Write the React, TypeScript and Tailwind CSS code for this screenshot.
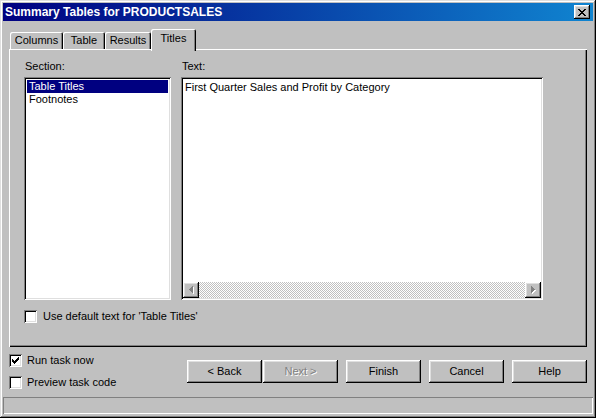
import React from "react";

const raised =
  "shadow-[inset_-1px_-1px_#000,inset_1px_1px_#fff,inset_-2px_-2px_#808080,inset_2px_2px_#dfdfdf]";
const sunken =
  "shadow-[inset_1px_1px_#808080,inset_-1px_-1px_#fff,inset_2px_2px_#000,inset_-2px_-2px_#dfdfdf]";

function Px({ rows, color, dx = 0, dy = 0 }: { rows: [number, number, number][]; color: string; dx?: number; dy?: number }) {
  return (
    <>
      {rows.map(([y, x, w], i) => (
        <rect key={i} x={x + dx} y={y + dy} width={w} height={1} fill={color} />
      ))}
    </>
  );
}

const checkRows: [number, number, number][] = [
  [0, 6, 1],
  [1, 5, 2],
  [2, 0, 1],
  [2, 4, 3],
  [3, 0, 2],
  [3, 3, 3],
  [4, 0, 5],
  [5, 1, 3],
  [6, 2, 1],
];

function CheckBox({ checked }: { checked?: boolean }) {
  return (
    <div className={`w-[13px] h-[13px] bg-white ${sunken} flex items-center justify-center shrink-0`}>
      {checked && (
        <svg width="7" height="7" viewBox="0 0 7 7" shapeRendering="crispEdges">
          <Px rows={checkRows} color="#000" />
        </svg>
      )}
    </div>
  );
}

const xRows: [number, number, number][] = [
  [0, 0, 2],
  [0, 6, 2],
  [1, 1, 2],
  [1, 5, 2],
  [2, 2, 4],
  [3, 3, 2],
  [4, 2, 4],
  [5, 1, 2],
  [5, 5, 2],
  [6, 0, 2],
  [6, 6, 2],
];

const leftArrow: [number, number, number][] = [
  [0, 3, 1],
  [1, 2, 2],
  [2, 1, 3],
  [3, 0, 4],
  [4, 1, 3],
  [5, 2, 2],
  [6, 3, 1],
];
const rightArrow: [number, number, number][] = [
  [0, 0, 1],
  [1, 0, 2],
  [2, 0, 3],
  [3, 0, 4],
  [4, 0, 3],
  [5, 0, 2],
  [6, 0, 1],
];

function ScrollBtn({ dir }: { dir: "l" | "r" }) {
  const rows = dir === "l" ? leftArrow : rightArrow;
  return (
    <div className={`w-[16px] h-[16px] bg-[#c0c0c0] ${raised} flex items-center justify-center shrink-0`}>
      <svg width="5" height="8" viewBox="0 0 5 8" shapeRendering="crispEdges">
        <Px rows={rows} color="#fff" dx={1} dy={1} />
        <Px rows={rows} color="#808080" />
      </svg>
    </div>
  );
}

function Button({ label, disabled }: { label: string; disabled?: boolean }) {
  return (
    <div
      className={`w-[75px] h-[23px] bg-[#c0c0c0] ${raised} flex items-center justify-center text-[11px] leading-[13px] ${
        disabled ? "text-[#808080] [text-shadow:1px_1px_#fff]" : "text-black"
      }`}
    >
      {label}
    </div>
  );
}

function Tab({ label, w, selected }: { label: string; w: string; selected?: boolean }) {
  if (selected) {
    return (
      <div
        className={`${w} h-[22px] mb-[-2px] relative z-10 bg-[#c0c0c0] rounded-t-[2px] shadow-[inset_1px_1px_#fff,inset_-1px_0_#000,inset_-2px_0_#808080] flex justify-center pt-[3px] text-[11px] leading-[13px]`}
      >
        {label}
      </div>
    );
  }
  return (
    <div
      className={`${w} h-[17px] bg-[#c0c0c0] rounded-t-[2px] shadow-[inset_1px_1px_#fff,inset_-1px_0_#000,inset_-2px_0_#808080] flex justify-center pt-[2px] text-[11px] leading-[13px]`}
    >
      {label}
    </div>
  );
}

export default function App() {
  return (
    <div
      className="w-[596px] h-[418px] bg-[#c0c0c0] p-[3px] flex flex-col text-black shadow-[inset_-1px_-1px_#000,inset_1px_1px_#dfdfdf,inset_-2px_-2px_#808080,inset_2px_2px_#fff] overflow-hidden"
      style={{ fontFamily: '"Liberation Sans", Arial, sans-serif' }}
    >
      {/* Title bar */}
      <div className="h-[18px] shrink-0 bg-[linear-gradient(90deg,#000080,#1084d0)] flex items-center justify-between pl-[2px] pr-[3px]">
        <span className="text-white font-bold text-[12px] leading-[14px]">Summary Tables for PRODUCTSALES</span>
        <div className={`w-[16px] h-[14px] bg-[#c0c0c0] ${raised} flex items-center justify-center`}>
          <svg width="8" height="7" viewBox="0 0 8 7" shapeRendering="crispEdges">
            <Px rows={xRows} color="#000" />
          </svg>
        </div>
      </div>

      {/* Content */}
      <div className="px-[6px] pt-[8px] flex flex-col">
        {/* Tabs */}
        <div className="h-[20px] flex items-end pl-[1px]">
          <Tab label="Columns" w="w-[53px]" />
          <Tab label="Table" w="w-[42px]" />
          <Tab label="Results" w="w-[46px]" />
          <Tab label="Titles" w="w-[45px]" selected />
        </div>

        {/* Panel */}
        <div className="w-[578px] h-[298px] shadow-[inset_1px_1px_#fff,inset_-1px_-1px_#000,inset_-2px_-2px_#808080] pt-[11px] pl-[15px] flex flex-col">
          <div className="flex gap-[10px]">
            <div className="flex flex-col w-[147px]">
              <div className="h-[17px] pl-[1px] text-[11px] leading-[13px]">Section:</div>
              <div className={`h-[223px] bg-white ${sunken} p-[3px] flex flex-col text-[11px] leading-[13px]`}>
                <div className="h-[13px] bg-[#000080] text-white pl-[2px]">Table Titles</div>
                <div className="h-[13px] pl-[2px]">Footnotes</div>
              </div>
            </div>
            <div className="flex flex-col w-[362px]">
              <div className="h-[17px] pl-[1px] text-[11px] leading-[13px]">Text:</div>
              <div className={`h-[223px] bg-white ${sunken} p-[2px] flex flex-col`}>
                <div className="flex-1 pl-[2px] pt-[2px] text-[11px] leading-[13px]">
                  First Quarter Sales and Profit by Category
                </div>
                <div className="h-[16px] flex bg-[image:repeating-conic-gradient(#c0c0c0_0%_25%,#fff_0%_50%)] bg-[length:2px_2px]">
                  <ScrollBtn dir="l" />
                  <div className="flex-1" />
                  <ScrollBtn dir="r" />
                </div>
              </div>
            </div>
          </div>
          <div className="mt-[10px] flex items-center gap-[6px] text-[11px] leading-[13px]">
            <CheckBox />
            <span>Use default text for 'Table Titles'</span>
          </div>
        </div>

        {/* Bottom area */}
        <div className="h-[50px] flex">
          <div className="w-[178px] pt-[7px] flex flex-col gap-[9px] text-[11px] leading-[13px]">
            <div className="flex items-center gap-[5px]">
              <CheckBox checked />
              <span>Run task now</span>
            </div>
            <div className="flex items-center gap-[5px]">
              <CheckBox />
              <span>Preview task code</span>
            </div>
          </div>
          <div className="pt-[13px] flex">
            <Button label="< Back" />
            <div className="w-[1px]" />
            <Button label="Next >" disabled />
            <div className="w-[8px]" />
            <Button label="Finish" />
            <div className="w-[8px]" />
            <Button label="Cancel" />
            <div className="w-[8px]" />
            <Button label="Help" />
          </div>
        </div>
      </div>

      {/* Status bar */}
      <div className="h-[17px] shrink-0 shadow-[inset_1px_1px_#808080,inset_-1px_-1px_#fff]" />
    </div>
  );
}
